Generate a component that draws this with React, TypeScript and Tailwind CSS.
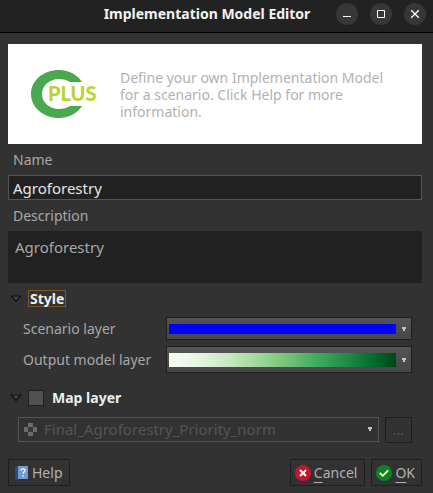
import type { ReactNode } from "react";

function WindowButton({ label, children }: { label: string; children: ReactNode }) {
  return (
    <button
      type="button"
      aria-label={label}
      className="flex size-[22px] items-center justify-center rounded-full bg-[#373737] text-white"
    >
      <svg width="10" height="10" viewBox="0 0 10 10" fill="none" stroke="currentColor">
        {children}
      </svg>
    </button>
  );
}

function TitleBar() {
  return (
    <header className="flex h-[33px] items-start border-b border-black bg-[#222222] pt-[3px] pr-[7px]">
      <h1 className="flex-1 pl-[94px] text-center text-sm leading-[22px] font-bold whitespace-nowrap text-[#f2f2f2]">
        Implementation Model Editor
      </h1>
      <div className="flex gap-3 pl-4">
        <WindowButton label="Minimize">
          <path d="M1 7.5h8" />
        </WindowButton>
        <WindowButton label="Maximize">
          <path d="M1.5 1.5h7v7h-7z" />
        </WindowButton>
        <WindowButton label="Close">
          <path d="M1.2 1.2l7.6 7.6M8.8 1.2L1.2 8.8" strokeWidth="1.3" />
        </WindowButton>
      </div>
    </header>
  );
}

function Logo() {
  return (
    <svg width="66" height="50" viewBox="0 0 66 50" role="img" aria-label="CPLUS" className="shrink-0">
      <path
        d="M51 13C46 5 37 1 28 1C13 1 0 11 0 25s13 24 28 24c9 0 18-4 23-12H39c-3 2-7 3-11 3c-10 0-17-7-17-15s7-15 17-15c4 0 8 1 11 3z"
        fill="#4aa94f"
      />
      <text
        x="17"
        y="32"
        fontSize="20"
        fontWeight="900"
        fill="#b9d433"
        fontFamily="Lato, sans-serif"
      >
        PLUS
      </text>
    </svg>
  );
}

function Triangle() {
  return (
    <svg width="12" height="8" viewBox="0 0 12 8" className="shrink-0">
      <path d="M1.5 1h9L6 6.500z" fill="#444444" stroke="#111111" strokeWidth="1.2" />
    </svg>
  );
}

function DownArrow() {
  return (
    <svg width="4" height="4" viewBox="0 0 4 4" className="shrink-0" fill="#c4c4c4">
      <path d="M0 0h4v2H3v2H1V2H0z" />
    </svg>
  );
}

function SymbolButton({ id, size, swatch }: { id: string; size: string; swatch: string }) {
  return (
    <button
      id={id}
      type="button"
      className={`flex flex-1 items-center gap-[6px] border border-[#1e1e1e] bg-linear-to-b from-[#545454] to-[#474747] pr-[5px] pl-[2px] ${size}`}
    >
      <span className={`flex-1 ${swatch}`} />
      <DownArrow />
    </button>
  );
}

const dialogButton =
  "flex h-[27px] items-center border border-[#1e1e1e] bg-[#323232] text-sm text-[#b1b1b1]";

export default function App() {
  return (
    <div className="min-h-screen bg-[#323232] font-['Noto_Sans','Open_Sans',sans-serif] text-sm text-[#a8a8a8]">
      <TitleBar />
      <form className="pt-[11px] pr-[11px] pb-[7px] pl-2" onSubmit={(e) => e.preventDefault()}>
        <section className="flex h-[100px] items-center bg-white pl-[23px]">
          <Logo />
          <p className="pr-6 pl-[23px] leading-[17px] text-[#b1b1b1]">
            Define your own Implementation Model for a scenario. Click Help for more information.
          </p>
        </section>

        <label htmlFor="name" className="block pl-[5px] leading-[31px]">
          Name
        </label>
        <input
          id="name"
          type="text"
          defaultValue="Agroforestry"
          className="block h-[25px] w-full border border-[#555555] bg-[#212121] px-1 text-[15px] text-[#e6e6e6] outline-none"
        />
        <label htmlFor="description" className="block pl-[5px] leading-[31px]">
          Description
        </label>
        <textarea
          id="description"
          defaultValue="Agroforestry"
          className="block h-[52px] w-full resize-none bg-[#212121] px-[7px] py-[6px] text-[15px] leading-5 outline-none"
        />

        <fieldset className="pr-[10px]">
          <legend className="flex items-center gap-[6px] py-[7px] pl-[2px] font-bold text-[#eeeeee]">
            <Triangle />
            <span className="border border-[#805522] px-px leading-[15px]">Style</span>
          </legend>
          <div className="flex items-center pt-[3px] pl-[15px]">
            <label htmlFor="scenario" className="w-[143px]">
              Scenario layer
            </label>
            <SymbolButton id="scenario" size="h-[23px]" swatch="h-[10px] bg-[#0000ff]" />
          </div>
          <div className="flex items-center pt-[6px] pl-[15px]">
            <label htmlFor="output" className="w-[143px] whitespace-nowrap">
              Output model layer
            </label>
            <SymbolButton
              id="output"
              size="h-[27px]"
              swatch="h-[14px] bg-[linear-gradient(to_right,#f7fcf5,#e5f5e0_13%,#c7e9c0_26%,#a1d99b_39%,#74c476_52%,#41ab5d_65%,#238b45_78%,#006d2c_90%,#00441b)]"
            />
          </div>
        </fieldset>

        <fieldset className="pt-[15px] pr-[10px]">
          <div className="flex items-center gap-[6px] pl-[2px]">
            <Triangle />
            <input
              id="map-layer"
              type="checkbox"
              className="size-4 appearance-none border border-[#1e1e1e] bg-[#515151] checked:bg-[#8a8a8a]"
            />
            <label htmlFor="map-layer" className="pl-[2px] font-bold text-[#eeeeee]">
              Map layer
            </label>
          </div>
          <div className="flex gap-[6px] pt-[9px] pl-[10px]">
            <div className="relative flex-1">
              <select
                disabled
                aria-label="Map layer file"
                className="block h-[25px] w-full appearance-none border border-[#555555] bg-[#323232] px-[25px] text-[15px] text-[#555555] opacity-100"
              >
                <option>Final_Agroforestry_Priority_norm</option>
              </select>
              <svg
                width="13"
                height="13"
                viewBox="0 0 13 13"
                className="pointer-events-none absolute top-[6px] left-[6px]"
              >
                <path d="M4 0h5v4H4zM0 4h4v5H0zM9 4h4v5H9zM4 9h5v4H4z" fill="#6b6b6b" />
                <path d="M4 4h5v5H4z" fill="#3a3a3a" />
              </svg>
              <span className="pointer-events-none absolute top-[10px] right-[7px] flex">
                <DownArrow />
              </span>
            </div>
            <button
              type="button"
              disabled
              aria-label="Browse"
              className="h-[26px] w-[27px] border border-[#1e1e1e] text-[#555555]"
            >
              ...
            </button>
          </div>
        </fieldset>

        <footer className="flex gap-[6px] pt-4">
          <button type="button" className={`${dialogButton} gap-1 px-[6px]`}>
            <svg width="13" height="14" viewBox="0 0 13 14">
              <path d="M0 1l3-1v14l-3-1z" fill="#27507c" />
              <path d="M3 0h10v13H3z" fill="#6f9bd1" />
              <path d="M6 4.500c0-2.200 4-2.200 4 0c0 1.500-2 1.500-2 3.300M8 9.300v1.500" fill="none" stroke="#fff" strokeWidth="1.300" />
            </svg>
            Help
          </button>
          <button type="button" className={`${dialogButton} ml-auto gap-[3px] pr-[7px] pl-1`}>
            <svg width="16" height="16" viewBox="0 0 16 16">
              <circle cx="8" cy="8" r="8" fill="#c7162b" />
              <path d="M5 5l6 6M11 5l-6 6" stroke="#fff" strokeWidth="2" />
            </svg>
            <span>
              <span className="underline underline-offset-4">C</span>ancel
            </span>
          </button>
          <button type="submit" className={`${dialogButton} gap-[3px] pr-[6px] pl-1`}>
            <svg width="16" height="16" viewBox="0 0 16 16">
              <circle cx="8" cy="8" r="8" fill="#0e8420" />
              <path d="M3.800 7.800l3 3l5.400-5.400" fill="none" stroke="#fff" strokeWidth="1.800" />
            </svg>
            <span>
              <span className="underline underline-offset-4">O</span>K
            </span>
          </button>
        </footer>
      </form>
    </div>
  );
}
